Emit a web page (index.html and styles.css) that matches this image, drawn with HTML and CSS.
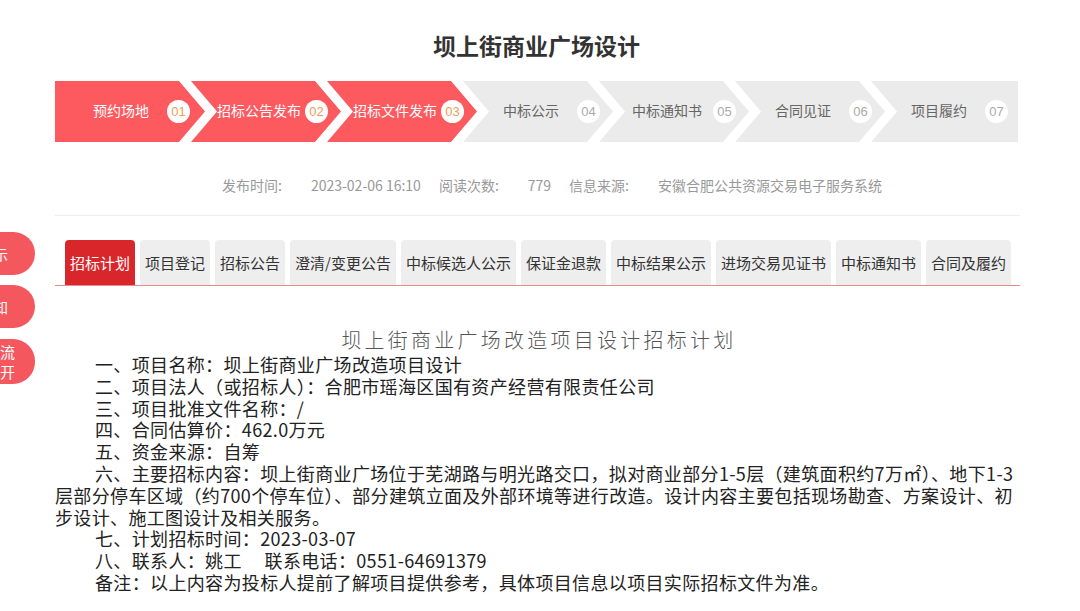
FILE: index.html
```html
<!DOCTYPE html>
<html lang="zh-CN">
<head>
<meta charset="utf-8">
<title>坝上街商业广场设计</title>
<link rel="stylesheet" href="styles.css">
</head>
<body>
<div class="side">
  <div class="side-btn side-1">公示</div>
  <div class="side-btn side-2">通知</div>
  <div class="side-btn side-3">交流<br>公开</div>
</div>
<div class="page">
  <h1 class="title">坝上街商业广场设计</h1>
  <div class="steps">
    <div class="step first on"><span class="st">预约场地</span><span class="num">01</span></div>
    <div class="step on"><span class="st">招标公告发布</span><span class="num">02</span></div>
    <div class="step on"><span class="st">招标文件发布</span><span class="num">03</span></div>
    <div class="step"><span class="st">中标公示</span><span class="num">04</span></div>
    <div class="step"><span class="st">中标通知书</span><span class="num">05</span></div>
    <div class="step"><span class="st">合同见证</span><span class="num">06</span></div>
    <div class="step last"><span class="st">项目履约</span><span class="num">07</span></div>
  </div>
  <div class="meta">
    <span class="lbl">发布时间:</span><span class="val">2023-02-06 16:10</span>
    <span class="lbl">阅读次数:</span><span class="val">779</span>
    <span class="lbl">信息来源:</span><span class="val">安徽合肥公共资源交易电子服务系统</span>
  </div>
  <div class="divider"></div>
  <div class="tabs">
    <div class="tab active">招标计划</div>
    <div class="tab">项目登记</div>
    <div class="tab">招标公告</div>
    <div class="tab">澄清/变更公告</div>
    <div class="tab">中标候选人公示</div>
    <div class="tab">保证金退款</div>
    <div class="tab">中标结果公示</div>
    <div class="tab">进场交易见证书</div>
    <div class="tab">中标通知书</div>
    <div class="tab">合同及履约</div>
  </div>
  <div class="article">
    <h2 class="sub">坝上街商业广场改造项目设计招标计划</h2>
    <p class="para">一、项目名称：坝上街商业广场改造项目设计</p>
    <p class="para">二、项目法人（或招标人）：合肥市瑶海区国有资产经营有限责任公司</p>
    <p class="para">三、项目批准文件名称：/</p>
    <p class="para">四、合同估算价：462.0万元</p>
    <p class="para">五、资金来源：自筹</p>
    <p class="para">六、主要招标内容：坝上街商业广场位于芜湖路与明光路交口，拟对商业部分1-5层（建筑面积约7万㎡）、地下1-3层部分停车区域（约700个停车位）、部分建筑立面及外部环境等进行改造。设计内容主要包括现场勘查、方案设计、初步设计、施工图设计及相关服务。</p>
    <p class="para">七、计划招标时间：2023-03-07</p>
    <p class="para">八、联系人：姚工　&nbsp;联系电话：0551-64691379</p>
    <p class="para">备注：以上内容为投标人提前了解项目提供参考，具体项目信息以项目实际招标文件为准。</p>
  </div>
</div>
</body>
</html>
```
FILE: styles.css
```css
* { box-sizing: border-box; }
html, body { margin: 0; padding: 0; background: #fff; }
body {
  font-family: "Noto Sans CJK SC", "Microsoft YaHei", sans-serif;
  color: #333;
  overflow: hidden;
  position: relative;
}
.page {
  width: 965px;
  margin-left: 55px;
  padding-top: 29px;
}
.title {
  margin: 0;
  text-align: center;
  font-size: 23px;
  line-height: 32px;
  font-weight: 700;
  color: #333;
  padding-right: 2px;
}
.steps {
  display: flex;
  margin-top: 20px;
  height: 61px;
  width: 963px;
}
.step {
  position: relative;
  width: 150px;
  height: 61px;
  margin-left: -14px;
  background: #ebebeb;
  color: #666;
  font-size: 14px;
  clip-path: polygon(0 0, 124px 0, 150px 50%, 124px 100%, 0 100%, 26px 50%);
  display: flex;
  align-items: center;
}
.step.first {
  margin-left: 0;
  clip-path: polygon(0 0, 124px 0, 150px 50%, 124px 100%, 0 100%);
}
.step.last {
  width: 147px;
  clip-path: polygon(0 0, 100% 0, 100% 100%, 0 100%, 26px 50%);
}
.step.on { background: #fd5a60; color: #fff; }
.st {
  width: 84px;
  margin-left: 26px;
  text-align: center;
  white-space: nowrap;
  line-height: 20px;
  padding-bottom: 4px;
}
.step.first .st { margin-left: 24px; }
.num {
  margin-left: 4px;
  margin-bottom: 1px;
  width: 23px;
  height: 23px;
  border-radius: 50%;
  background: #fff;
  color: #aaa;
  font-size: 13px;
  line-height: 23px;
  text-align: center;
  font-family: "Liberation Sans", Arial, sans-serif;
}
.step.on .num { color: #ee9d58; }
.meta {
  display: flex;
  margin-top: 33px;
  font-size: 14px;
  line-height: 20px;
  color: #999;
  padding-left: 167px;
  white-space: nowrap;
}
.lbl { margin-right: 29px; }
.val { margin-right: 18px; }
.divider {
  margin-top: 20px;
  height: 1px;
  background: #eee;
}
.tabs {
  margin-top: 24px;
  padding-left: 10px;
  display: flex;
  gap: 5px;
  border-bottom: 1px solid #e78c8c;
}
.tab {
  height: 45px;
  padding: 0 5px;
  background: #eee;
  border-radius: 4px 4px 0 0;
  font-size: 15px;
  line-height: 45px;
  color: #333;
  white-space: nowrap;
}
.tab.active { background: #d9262b; color: #fff; }
.article {
  width: 962px;
  padding-top: 40px;
}
.sub {
  margin: 0;
  text-align: center;
  font-size: 20px;
  line-height: 28px;
  font-weight: 300;
  letter-spacing: 3.25px;
  color: #555;
  padding-left: 6px;
}
.para {
  margin: 0;
  font-size: 18px;
  line-height: 21.8px;
  color: #222;
  text-indent: 40px;
  letter-spacing: 0.35px;
}
.side {
  position: absolute;
  left: 0;
  top: 232px;
  width: 40px;
}
.side-btn {
  position: absolute;
  left: -50px;
  width: 85px;
  background: #f4585e;
  color: #fff;
  font-size: 14px;
  border-radius: 0 22px 22px 0;
  text-align: right;
  display: flex;
  align-items: center;
  justify-content: flex-end;
}
.side-1 { top: 0; height: 43px; padding-right: 27px; line-height: 20px; }
.side-2 { top: 53px; height: 43px; padding-right: 27px; line-height: 20px; }
.side-3 { top: 107px; height: 45px; padding-right: 20px; line-height: 20px; font-size: 15px; }
```
